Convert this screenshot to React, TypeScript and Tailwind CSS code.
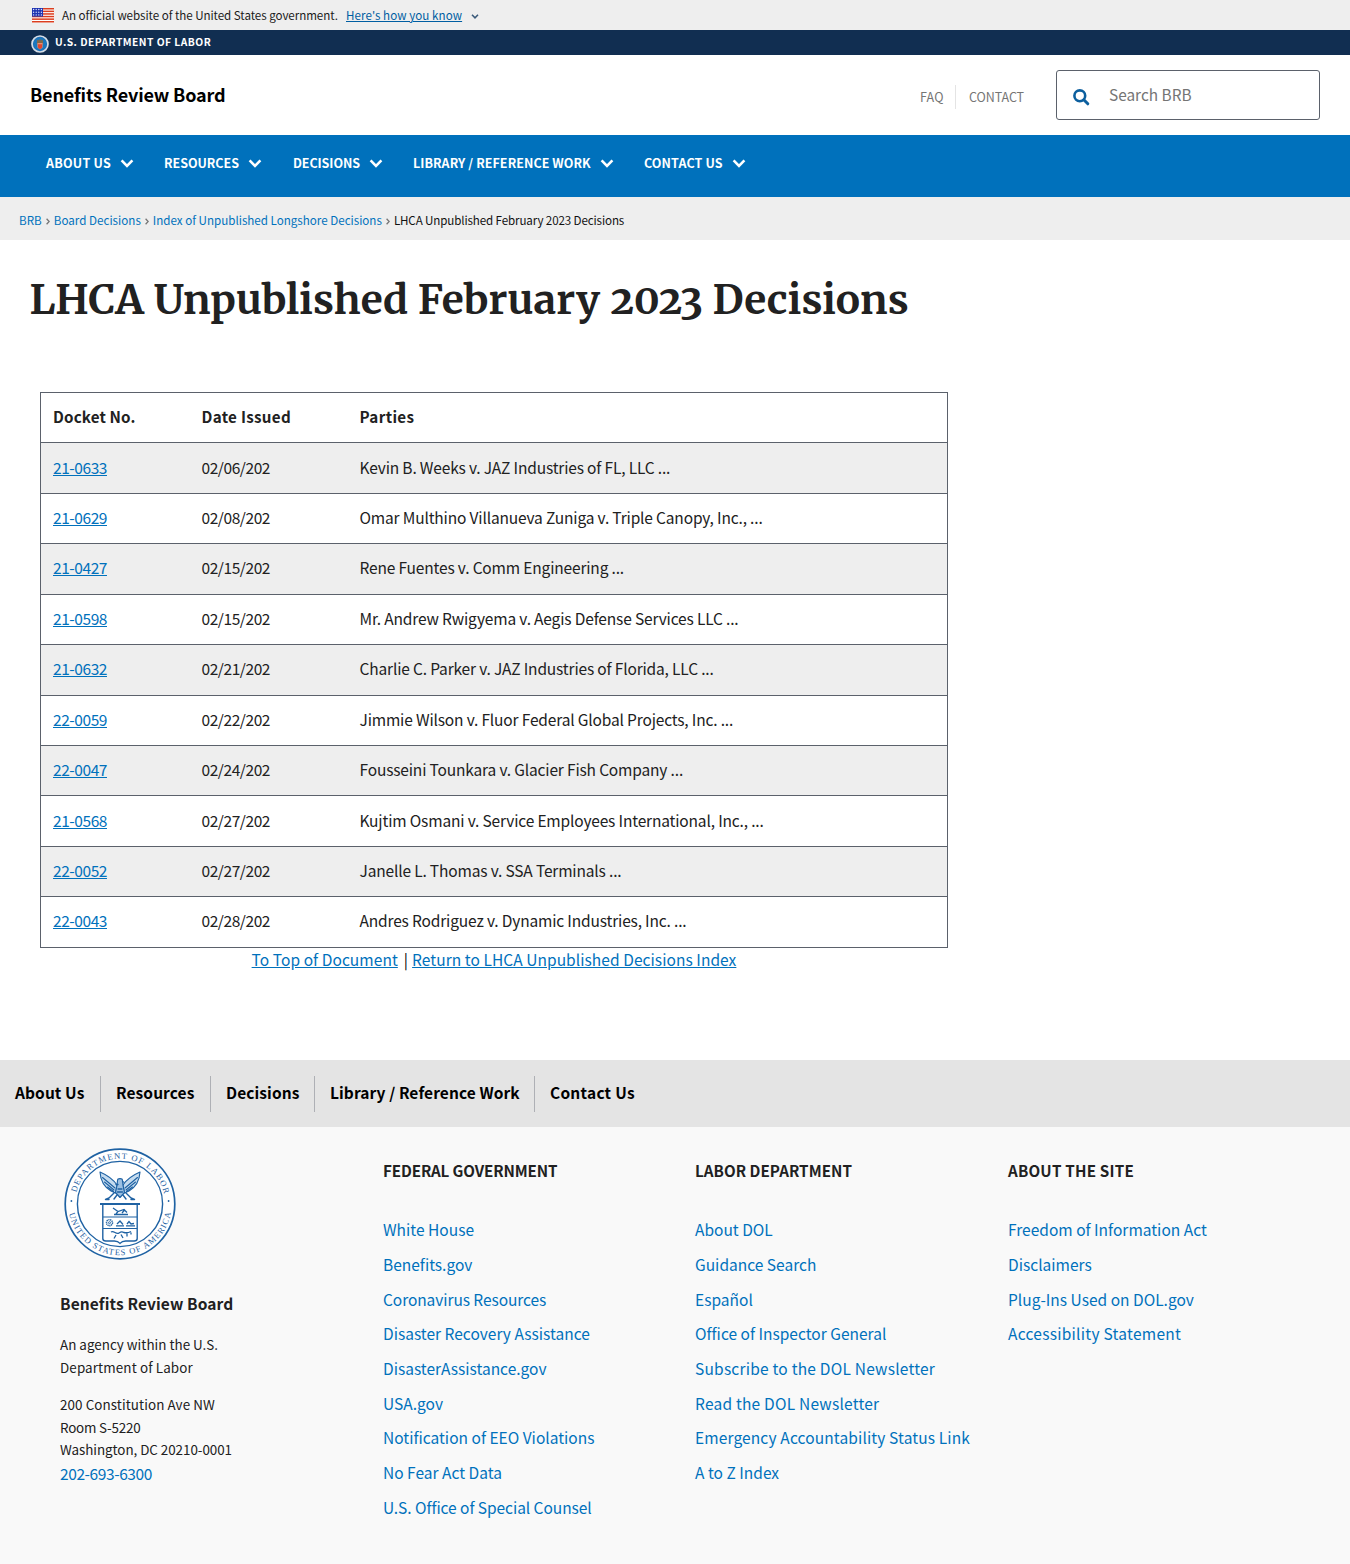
import type { ReactNode } from 'react';

const SANS = "font-['Source_Sans_Pro','Noto_Sans_CJK_SC','Noto_Sans',sans-serif]";

const rows: [string, string, string][] = [
  ['21-0633', '02/06/202', 'Kevin B. Weeks v. JAZ Industries of FL, LLC ...'],
  ['21-0629', '02/08/202', 'Omar Multhino Villanueva Zuniga v. Triple Canopy, Inc., ...'],
  ['21-0427', '02/15/202', 'Rene Fuentes v. Comm Engineering ...'],
  ['21-0598', '02/15/202', 'Mr. Andrew Rwigyema v. Aegis Defense Services LLC ...'],
  ['21-0632', '02/21/202', 'Charlie C. Parker v. JAZ Industries of Florida, LLC ...'],
  ['22-0059', '02/22/202', 'Jimmie Wilson v. Fluor Federal Global Projects, Inc. ...'],
  ['22-0047', '02/24/202', 'Fousseini Tounkara v. Glacier Fish Company ...'],
  ['21-0568', '02/27/202', 'Kujtim Osmani v. Service Employees International, Inc., ...'],
  ['22-0052', '02/27/202', 'Janelle L. Thomas v. SSA Terminals ...'],
  ['22-0043', '02/28/202', 'Andres Rodriguez v. Dynamic Industries, Inc. ...'],
];

const nav: [string, string, string][] = [
  ['ABOUT US', 'w-[118px]', 'tracking-[0.22px]'],
  ['RESOURCES', 'w-[129px]', 'tracking-[-0.03px]'],
  ['DECISIONS', 'w-[120px]', 'tracking-[-0.08px]'],
  ['LIBRARY / REFERENCE WORK', 'w-[231px]', 'tracking-[0.07px]'],
  ['CONTACT US', 'w-[130px]', 'tracking-[0.12px]'],
];

const footerNav: [string, string][] = [
  ['About Us', 'w-[101px]'],
  ['Resources', 'w-[110px]'],
  ['Decisions', 'w-[104px]'],
  ['Library / Reference Work', 'w-[220px]'],
  ['Contact Us', 'w-[120px] tracking-[0.250px]'],
];

const columns: [string, string, string, string[]][] = [
  [
    'FEDERAL GOVERNMENT',
    'w-[312px]',
    'tracking-[-0.130px]',
    [
      'White House',
      'Benefits.gov',
      'Coronavirus Resources',
      'Disaster Recovery Assistance',
      'DisasterAssistance.gov',
      'USA.gov',
      'Notification of EEO Violations',
      'No Fear Act Data',
      'U.S. Office of Special Counsel',
    ],
  ],
  [
    'LABOR DEPARTMENT',
    'w-[313px]',
    'tracking-[0.050px]',
    [
      'About DOL',
      'Guidance Search',
      'Español',
      'Office of Inspector General',
      'Subscribe to the DOL Newsletter',
      'Read the DOL Newsletter',
      'Emergency Accountability Status Link',
      'A to Z Index',
    ],
  ],
  [
    'ABOUT THE SITE',
    'w-[300px]',
    'tracking-[0.200px]',
    ['Freedom of Information Act', 'Disclaimers', 'Plug-Ins Used on DOL.gov', 'Accessibility Statement'],
  ],
];

// Letter-spacing corrections for the longer footer links.
const linkTracking: Record<string, string> = {
  'Subscribe to the DOL Newsletter': 'tracking-[0.220px]',
  'Read the DOL Newsletter': 'tracking-[0.220px]',
  'Emergency Accountability Status Link': 'tracking-[0.130px]',
  'Accessibility Statement': 'tracking-[0.270px]',
  'Coronavirus Resources': 'tracking-[-0.070px]',
  'U.S. Office of Special Counsel': 'tracking-[-0.050px]',
};

function Flag() {
  return (
    <svg viewBox="0 0 22 15" className="h-[15px] w-[22px] shrink-0">
      <rect width="22" height="15" fill="#fff" />
      {[0, 1, 2, 3, 4, 5].map((i) => (
        <rect key={i} y={i * 2.6} width="22" height="1.5" fill="#db3e1f" />
      ))}
      <rect width="11" height="8.6" fill="#1e33b1" />
      {[1.5, 4.2, 6.9].map((y) =>
        [1.6, 4.2, 6.8, 9.4].map((x) => <circle key={`${x}-${y}`} cx={x} cy={y} r="0.7" fill="#dfe4ff" />),
      )}
    </svg>
  );
}

function SmallSeal() {
  return (
    <svg viewBox="0 0 18 18" className="h-[18px] w-[18px] shrink-0">
      <circle cx="9" cy="9" r="8" fill="#1f6fb5" stroke="#d5dde6" strokeWidth="1.7" />
      <circle cx="9" cy="9" r="6.2" fill="#1878c0" />
      <path d="M6.200 4.600 8 5.400 9 3.600l1 1.800 1.800-.8.4 5H5.800z" fill="#80694a" />
      <path d="M6.400 8h5.200v4.600L9 14.600l-2.600-2z" fill="#e3907a" />
      <path d="M7 9.200h4v3.400L9 14.200l-2-1.600z" fill="#e2452c" />
    </svg>
  );
}

function Chevron({ className, width }: { className: string; width: number }) {
  return (
    <svg viewBox="0 0 14 9" className={className} fill="none" stroke="currentColor" strokeWidth={width}>
      <path d="M1.6 1.4 7 6.8l5.4-5.4" />
    </svg>
  );
}

function Seal() {
  const serif = "font-['Liberation_Serif',serif] text-[8.5px]";
  return (
    <svg viewBox="0 0 112 112" className="h-[112px] w-[112px]" fill="none" stroke="#1f62a3">
      <defs>
        <path id="arcTop" d="M10.800 56a45.200 45.200 0 0 1 90.400 0" />
        <path id="arcBottom" d="M5 64.500a51.800 51.800 0 0 0 102 0" />
      </defs>
      <circle cx="56" cy="56" r="54.800" strokeWidth="1.700" fill="#fff" />
      <circle cx="56" cy="56" r="42.600" strokeWidth="1.400" />
      <g fill="#1f62a3" stroke="none">
        <text className={serif}>
          <textPath href="#arcTop" startOffset="11.500" textLength="120" lengthAdjust="spacing">
            DEPARTMENT OF LABOR
          </textPath>
        </text>
        <text className={serif}>
          <textPath href="#arcBottom" startOffset="1" textLength="143" lengthAdjust="spacing">
            UNITED STATES OF AMERICA
          </textPath>
        </text>
        <circle cx="7.400" cy="53" r="0.900" />
        <circle cx="104.600" cy="53" r="0.900" />
      </g>
      <g strokeWidth="1.150" strokeLinecap="round" strokeLinejoin="round">
        <path d="M36 24c.5 8.500 5 15.500 11 19l4.500 2 1.500-8c-4-6-10-10-17-13z" fill="#c4dbef" />
        <path d="M76 24c-.5 8.500-5 15.500-11 19l-4.500 2-1.500-8c4-6 10-10 17-13z" fill="#c4dbef" />
        <path d="M38.500 29.500 51 40M40.500 34l9.500 8M43.500 39l6 4.500M73.500 29.500 61 40M71.500 34 62 42M68.500 39l-6 4.500" />
        <path d="M53.500 32.500c0-2.500 5-2.500 5 0l.5 5 1.500 7-4.500 5-4.500-5 1.500-7z" fill="#9cc0e2" />
        <path d="M52 36.500h2M58.500 33.500l1.500.8M54 41h4M53.500 44h5" strokeWidth="1.300" />
        <path d="m50 45-5 5-3.500 1.500M62 45l5 5 3.500 1.500M53 47l-3 4M59 47l3 4M45 51.500h-3M67 51.500h3" strokeWidth="1.400" />
      </g>
      <path d="M36 56h40" strokeWidth="2" />
      <path d="M38.800 56v34.500q0 2.500 3 2.500h8.500q3.700 0 5.700 2.400 2-2.400 5.700-2.400h8.500q3 0 3-2.500V56" strokeWidth="1.400" />
      <path d="M39 69h34M39 80.500h34" strokeWidth="1.200" />
      <circle cx="45.500" cy="74.700" r="3" strokeWidth="1.500" strokeDasharray="1.200 .6" />
      <circle cx="45.500" cy="74.700" r="1" strokeWidth="0.900" />
      <path
        d="m49 60 5 3.500 6-2 3 3M50 66.500h14M54 63.500l-2 2.500M61 61.500l-3 3.500M52 77.800h8M53 76l3-3 3 3.500M62 77.800h9M63 76l2-2.500 2 2.500 3-.5M47 84c3-2 5 3 8 1s3-1 5-.5 4 .5 7-1M52 87l-2 3.500M57 86.500l2 3.500M63 85.500v3M67 84.500v2"
        strokeWidth="1.300"
      />
    </svg>
  );
}

function Link({ children, className = '' }: { children: ReactNode; className?: string }) {
  return (
    <a href="#" className={`text-[#0071bc] ${className}`}>
      {children}
    </a>
  );
}

function Crumbs() {
  const sep = (
    <svg viewBox="0 0 4 7" className="mx-[4px] mt-[3px] h-[7px] w-[4px]" fill="none" stroke="#757575" strokeWidth="1.300">
      <path d="m.6.8 2.600 2.700L.6 6.200" />
    </svg>
  );
  return (
    <div className="flex h-[43px] items-center bg-[#eeeeee] pt-[2px] pl-[19px] text-[11.600px] leading-[20px] text-[#111]">
      <Link className="tracking-[0.050px]">BRB</Link>
      {sep}
      <Link className="tracking-[0.020px]">Board Decisions</Link>
      {sep}
      <Link>Index of Unpublished Longshore Decisions</Link>
      {sep}
      <span className="tracking-[-0.120px]">LHCA Unpublished February 2023 Decisions</span>
    </div>
  );
}

export default function App() {
  return (
    <div className={`h-[1564px] w-[1350px] overflow-hidden bg-white text-[15.200px] whitespace-nowrap text-[#212121] ${SANS}`}>
      <div className="flex h-[30px] items-center bg-[#eeeeee] pl-8 text-[11.600px] leading-[20px] text-[#1b1b1b]">
        <Flag />
        <span className="ml-2 w-[284px] tracking-[-0.050px]">An official website of the United States government.</span>
        <span className="w-[117px] tracking-[0.060px] text-[#005ea2] underline underline-offset-1">Here's how you know</span>
        <Chevron className="mt-[3px] ml-[8px] h-[5px] w-[8px] text-[#3a5a7a]" width={2.8} />
      </div>

      <div className="flex h-[25px] items-center bg-[#112e51] pl-[31px] text-white">
        <div className="mt-[3px] flex">
          <SmallSeal />
        </div>
        <span className="mb-[1px] ml-[6px] text-[10.300px] leading-[16px] font-bold tracking-[0.460px]">U.S. DEPARTMENT OF LABOR</span>
      </div>

      <header className="flex h-[80px] items-center pr-[30px] pl-[30px]">
        <h1 className="mr-auto mb-[2px] text-[18px] leading-[24px] font-bold tracking-[-0.150px] text-black">Benefits Review Board</h1>
        <div className="mt-[3px] flex items-center text-[12.500px] leading-[24px] text-[#757575]">
          <span className="h-[24px] w-[36px] border-r border-[#e4e4e4] tracking-[0.200px]">FAQ</span>
          <span className="w-[100px] pl-[13px] tracking-[-0.070px]">CONTACT</span>
        </div>
        <div className="flex h-[50px] w-[264px] items-center rounded-[3px] border border-[#5b616b] bg-white pl-[16px]">
          <svg viewBox="0 0 17 17" className="mt-[4px] h-[17px] w-[17px] shrink-0" fill="none" stroke="#0c5f9e">
            <circle cx="6.800" cy="6.800" r="5.400" strokeWidth="2.600" />
            <path d="m10.800 10.800 4 4" strokeWidth="3" strokeLinecap="round" />
          </svg>
          <span className="mb-[2px] ml-[19px] text-[15.400px] leading-[24px] text-[#757575]">Search BRB</span>
        </div>
      </header>

      <nav className="flex h-[62px] bg-[#0071bc] pt-[16px] pl-[46px] text-[12.500px] leading-[24px] font-bold text-white">
        {nav.map(([label, width, tracking]) => (
          <div key={label} className={`flex h-[24px] items-center ${width}`}>
            <span className={tracking}>{label}</span>
            <Chevron className="ml-[9px] h-[9px] w-[14px]" width={2.6} />
          </div>
        ))}
      </nav>

      <Crumbs />

      <main className="h-[820px]">
        <h2 className="h-[152px] pt-[34px] pl-[29.500px] font-['Merriweather','Noto_Serif',serif] text-[40.600px] leading-[52px] font-bold tracking-[0.075px] oldstyle-nums">
          LHCA Unpublished February 2023 Decisions
        </h2>
        <div className="ml-[40px] w-[908px]">
          <table className="w-full table-fixed border-collapse border border-[#5b616b]">
            <colgroup>
              <col className="w-[149px]" />
              <col className="w-[158px]" />
              <col />
            </colgroup>
            <thead>
              <tr className="h-[50.430px] text-left font-bold">
                <th className="px-3 pb-[2px] tracking-[0.140px]">Docket No.</th>
                <th className="px-3 pb-[2px] tracking-[0.300px]">Date Issued</th>
                <th className="px-3 pb-[2px] tracking-[0.350px]">Parties</th>
              </tr>
            </thead>
            <tbody>
              {rows.map(([docket, date, parties]) => (
                <tr key={docket} className="h-[50.430px] border-t border-[#5b616b] text-[15.500px] leading-[24px] odd:bg-[#eeeeee]">
                  <td className="px-3 pb-[3px] tracking-[-0.430px]">
                    <Link className="underline underline-offset-1">{docket}</Link>
                  </td>
                  <td className="px-3 pb-[3px] tracking-[-0.430px]">{date}</td>
                  <td className="px-3 pb-[3px] tracking-[-0.160px]">{parties}</td>
                </tr>
              ))}
            </tbody>
          </table>
          <div className="-mt-px flex justify-center text-[15.500px] leading-[25px] tracking-[0.060px] text-black">
            <Link className="underline underline-offset-1">To Top of Document</Link>
            <span className="mr-[4px] ml-[6px]">|</span>
            <Link className="underline underline-offset-1">Return to LHCA Unpublished Decisions Index</Link>
          </div>
        </div>
      </main>

      <footer>
        <div className="flex h-[67px] bg-[#e4e4e4] pt-[16px] text-[15.500px] leading-[33px] font-bold tracking-[0.090px] text-black">
          {footerNav.map(([label, width]) => (
            <div key={label} className={`h-[36px] border-r border-[#aeb0b5] pl-[15px] last:border-r-0 ${width}`}>
              {label}
            </div>
          ))}
        </div>
        <div className="flex h-[437px] bg-[#f9f9f9]">
          <div className="w-[383px] pt-[20.500px] pl-[60px]">
            <div className="ml-[4px]">
              <Seal />
            </div>
            <div className="mt-[31.500px] text-[15.500px] leading-[24px] font-bold tracking-[0.110px]">Benefits Review Board</div>
            <p className="mt-[18px] text-[13.420px] leading-[22.500px] tracking-[0.010px]">
              An agency within the U.S.
              <br />
              <span className="tracking-[0.120px]">Department of Labor</span>
            </p>
            <p className="mt-[15px] text-[13.420px] leading-[22.500px]">
              <span className="tracking-[0.080px]">200 Constitution Ave NW</span>
              <br />
              <span className="tracking-[-0.200px]">Room S-5220</span>
              <br />
              <span className="tracking-[-0.050px]">Washington, DC 20210-0001</span>
            </p>
            <div className="-mt-px text-[15.500px] leading-[26px] tracking-[-0.400px]">
              <Link>202-693-6300</Link>
            </div>
          </div>
          {columns.map(([title, width, tracking, links]) => (
            <div key={title} className={`pt-[31px] ${width}`}>
              <h3 className={`mb-[30.300px] leading-[24px] font-bold ${tracking}`}>{title}</h3>
              <ul className="text-[15.500px]">
                {links.map((l) => (
                  <li key={l} className="h-[34.700px] leading-[34.700px]">
                    <Link className={linkTracking[l] ?? 'tracking-[0.010px]'}>{l}</Link>
                  </li>
                ))}
              </ul>
            </div>
          ))}
        </div>
      </footer>
    </div>
  );
}
